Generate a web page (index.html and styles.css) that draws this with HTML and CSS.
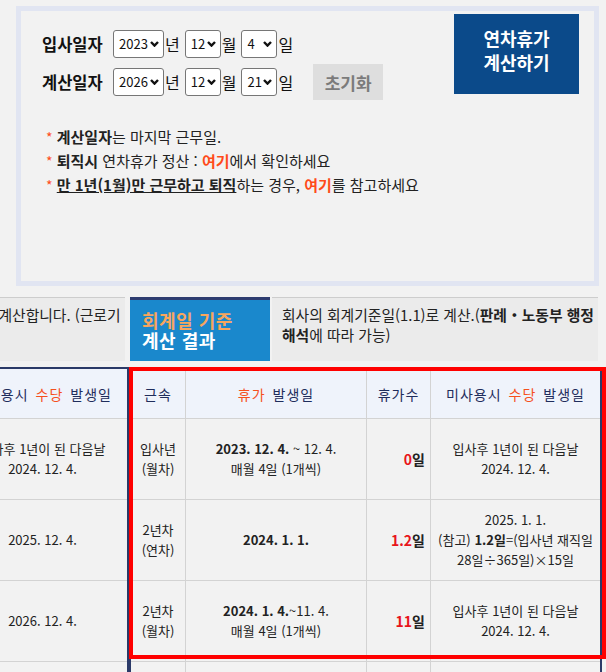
FILE: index.html
```html
<!DOCTYPE html>
<html lang="ko">
<head>
<meta charset="utf-8">
<title>연차휴가 계산기</title>
<link rel="stylesheet" href="styles.css">
</head>
<body>
<section class="calc-box">
  <div class="calc-top">
    <div class="date-form">
      <div class="date-row">
        <span class="row-label">입사일자</span>
        <span class="sel-wrap sel-year"><select class="sel"><option>2023</option></select><svg class="chev" viewBox="0 0 9 6"><polyline points="1,1 4.5,4.6 8,1"/></svg></span><span class="unit">년</span>
        <span class="sel-wrap sel-sm"><select class="sel"><option>12</option></select><svg class="chev" viewBox="0 0 9 6"><polyline points="1,1 4.5,4.6 8,1"/></svg></span><span class="unit">월</span>
        <span class="sel-wrap sel-sm"><select class="sel"><option>4</option></select><svg class="chev" viewBox="0 0 9 6"><polyline points="1,1 4.5,4.6 8,1"/></svg></span><span class="unit">일</span>
      </div>
      <div class="date-row date-row-2">
        <span class="row-label">계산일자</span>
        <span class="sel-wrap sel-year"><select class="sel"><option>2026</option></select><svg class="chev" viewBox="0 0 9 6"><polyline points="1,1 4.5,4.6 8,1"/></svg></span><span class="unit">년</span>
        <span class="sel-wrap sel-sm"><select class="sel"><option>12</option></select><svg class="chev" viewBox="0 0 9 6"><polyline points="1,1 4.5,4.6 8,1"/></svg></span><span class="unit">월</span>
        <span class="sel-wrap sel-sm"><select class="sel"><option>21</option></select><svg class="chev" viewBox="0 0 9 6"><polyline points="1,1 4.5,4.6 8,1"/></svg></span><span class="unit">일</span>
        <button class="reset-btn" type="button">초기화</button>
      </div>
    </div>
    <button class="calc-btn" type="button">연차휴가<br>계산하기</button>
  </div>
  <ul class="notes">
    <li><span class="star">*</span> <b>계산일자</b>는 마지막 근무일.</li>
    <li><span class="star">*</span> <b>퇴직시</b> 연차휴가 정산 : <span class="link">여기</span>에서 확인하세요</li>
    <li><span class="star">*</span> <b class="ul">만 1년(1월)만 근무하고 퇴직</b>하는 경우, <span class="link">여기</span>를 참고하세요</li>
  </ul>
</section>

<div class="compare">
  <div class="panel">
    <div class="panel-head">
      <div class="tab"><span class="tab-hl">입사일 기준</span><br>계산 결과</div>
      <p class="desc">근로자의 입사일자를 기준으로 계산합니다. (근로기<br>준법 제60조)</p>
    </div>
    <table class="result">
      <thead>
        <tr><th class="c1">근속</th><th class="c2"><span class="hot">휴가</span> 발생일</th><th class="c3">휴가수</th><th class="c4">미사용시 <span class="hot">수당</span> 발생일</th></tr>
      </thead>
      <tbody>
        <tr><td>1년미만<br>(월차)</td><td><b>2024. 1. 4.</b>~11. 4.<br>매월 4일 (1개씩)</td><td class="cnt"><b><span class="red">11</span>일</b></td><td>입사후 1년이 된 다음날<br>2024. 12. 4.</td></tr>
        <tr><td>2년차<br>(연차)</td><td><b>2024. 12. 4.</b></td><td class="cnt"><b><span class="red">15</span>일</b></td><td>2025. 12. 4.</td></tr>
        <tr><td>3년차<br>(연차)</td><td><b>2025. 12. 4.</b></td><td class="cnt"><b><span class="red">15</span>일</b></td><td>2026. 12. 4.</td></tr>
        <tr><td>4년차<br>(연차)</td><td><b>2026. 12. 4.</b></td><td class="cnt"><b><span class="red">16</span>일</b></td><td>2027. 12. 4.</td></tr>
      </tbody>
    </table>
  </div>

  <div class="panel">
    <div class="panel-head">
      <div class="tab"><span class="tab-hl">회계일 기준</span><br>계산 결과</div>
      <p class="desc">회사의 회계기준일(1.1)로 계산.(<b>판례・노동부 행정</b><br><b>해석</b>에 따라 가능)</p>
    </div>
    <table class="result">
      <thead>
        <tr><th class="c1">근속</th><th class="c2"><span class="hot">휴가</span> 발생일</th><th class="c3">휴가수</th><th class="c4">미사용시 <span class="hot">수당</span> 발생일</th></tr>
      </thead>
      <tbody>
        <tr><td>입사년<br>(월차)</td><td><b>2023. 12. 4.</b> ~ 12. 4.<br>매월 4일 (1개씩)</td><td class="cnt"><b><span class="red">0</span>일</b></td><td>입사후 1년이 된 다음날<br>2024. 12. 4.</td></tr>
        <tr><td>2년차<br>(연차)</td><td><b>2024. 1. 1.</b></td><td class="cnt"><b><span class="red">1.2</span>일</b></td><td class="tight">2025. 1. 1.<br>(참고) <b>1.2일</b>=(입사년 재직일<br>28일÷365일)×15일</td></tr>
        <tr><td>2년차<br>(월차)</td><td><b>2024. 1. 4.</b>~11. 4.<br>매월 4일 (1개씩)</td><td class="cnt"><b><span class="red">11</span>일</b></td><td>입사후 1년이 된 다음날<br>2024. 12. 4.</td></tr>
        <tr><td>3년차<br>(연차)</td><td><b>2025. 1. 1.</b></td><td class="cnt"><b><span class="red">15</span>일</b></td><td>2026. 1. 1.</td></tr>
      </tbody>
    </table>
    <div class="highlight"></div>
  </div>
</div>
</body>
</html>
```

FILE: styles.css
```css
* { box-sizing: border-box; }

html, body {
  margin: 0;
  padding: 0;
  overflow: hidden;
}

body {
  width: 606px;
  height: 672px;
  background: #f2f2f2;
  color: #222;
  font-family: "Noto Sans CJK KR", "Noto Sans", sans-serif;
}

/* ---------- top calculator box ---------- */
.calc-box {
  margin: 6px 0 0 16px;
  width: 583px;
  height: 280px;
  border: 5px solid #e1e5f2;
  padding: 3px 15px 0 21px;
}

.calc-top {
  display: flex;
  justify-content: space-between;
  align-items: flex-start;
}

.date-form {
  margin-top: 16px;
  display: flex;
  flex-direction: column;
  gap: 6px;
}

.date-row {
  display: flex;
  align-items: center;
  height: 28px;
}

.date-row-2 { height: 36px; }

.row-label {
  width: 64px;
  margin-right: 7px;
  font-size: 16.5px;
  font-weight: bold;
  line-height: 28px;
  color: #111;
  white-space: nowrap;
}

.sel-wrap {
  position: relative;
  display: inline-flex;
  flex: none;
  height: 28px;
}

.sel-year { width: 51px; }
.sel-sm { width: 36px; }

.sel {
  appearance: none;
  -webkit-appearance: none;
  width: 100%;
  height: 28px;
  margin: 0;
  padding: 0 0 0 5px;
  border: 1px solid #767676;
  border-radius: 3px;
  background: #fff;
  color: #111;
  font: 13px/26px "Noto Sans CJK KR", "Noto Sans", sans-serif;
}

.chev {
  position: absolute;
  right: 5px;
  top: 11px;
  width: 9px;
  height: 6px;
  fill: none;
  stroke: #111;
  stroke-width: 2.4;
  pointer-events: none;
}

.unit {
  margin: 0 5px 0 1px;
  font-size: 16px;
  line-height: 28px;
  color: #111;
}

.reset-btn {
  margin-left: 15px;
  width: 70px;
  height: 36px;
  border: 0;
  padding: 0;
  background: #dedede;
  color: #7b7b7b;
  font: bold 17px "Noto Sans CJK KR", "Noto Sans", sans-serif;
}

.calc-btn {
  width: 125px;
  height: 80px;
  border: 0;
  padding: 12px 0 20px;
  background: #0b4a8a;
  color: #fff;
  font: bold 18px/24px "Noto Sans CJK KR", "Noto Sans", sans-serif;
}

.notes {
  list-style: none;
  margin: 25px 0 0;
  padding: 0 0 0 4px;
  font-size: 15px;
  line-height: 24px;
  color: #222;
}

.star { color: #ff4d1c; font-size: 14px; }
.link { color: #ff4b1a; font-weight: bold; }
.ul { text-decoration: underline; }

/* ---------- comparison panels ---------- */
.compare {
  display: flex;
  width: 946px;
  margin: 11px 0 0 -344px;
}

.panel {
  position: relative;
  flex: none;
  width: 473px;
}

.panel-head {
  display: flex;
  gap: 2px;
  height: 64px;
  margin: 0 4px 0 1px;
}

.tab {
  flex: none;
  width: 140px;
  padding: 10px 0 0 12px;
  border-top: 3px solid #2e3c70;
  background: #1a88cc;
  color: #fff;
  font-size: 18px;
  font-weight: bold;
  line-height: 20px;
  letter-spacing: 0.5px;
  white-space: nowrap;
}

.tab-hl { color: #f7a65e; }

.desc {
  flex: 1;
  margin: 0;
  padding: 7px 0 0 10px;
  border-top: 1px solid #cdcdcd;
  background: #ebebeb;
  font-size: 14.8px;
  line-height: 20px;
  white-space: nowrap;
  overflow: hidden;
  color: #222;
}

.result {
  width: 473px;
  margin-top: 6px;
  border: 2px solid #2b3a68;
  border-collapse: separate;
  border-spacing: 0;
  table-layout: fixed;
}

.result th,
.result td {
  padding: 0 2px;
  border-right: 1px solid #d3d3d3;
  border-bottom: 1px solid #d3d3d3;
  text-align: center;
  vertical-align: middle;
}

.result th:last-child,
.result td:last-child { border-right: 0; }

.result th {
  height: 50px;
  background: #eff3fb;
  color: #1f2d5c;
  font-size: 14px;
  font-weight: normal;
  letter-spacing: 1px;
  word-spacing: 2px;
  white-space: nowrap;
}

.result th.c1 { width: 55px; }
.result th.c2 { width: 181px; }
.result th.c3 { width: 64px; }
.result th.c4 { width: 169px; }

.result td {
  height: 81px;
  font-size: 13px;
  line-height: 20px;
  color: #222;
}

.result td.cnt {
  text-align: right;
  padding-right: 5px;
  font-size: 14px;
}

.result td.tight { white-space: nowrap; padding: 0; }

.hot { color: #f5501e; }
.red { color: #e8151b; }

.highlight {
  position: absolute;
  left: 0;
  top: 70px;
  width: 477px;
  height: 292px;
  border: 4px solid #ff0000;
  pointer-events: none;
}
```
